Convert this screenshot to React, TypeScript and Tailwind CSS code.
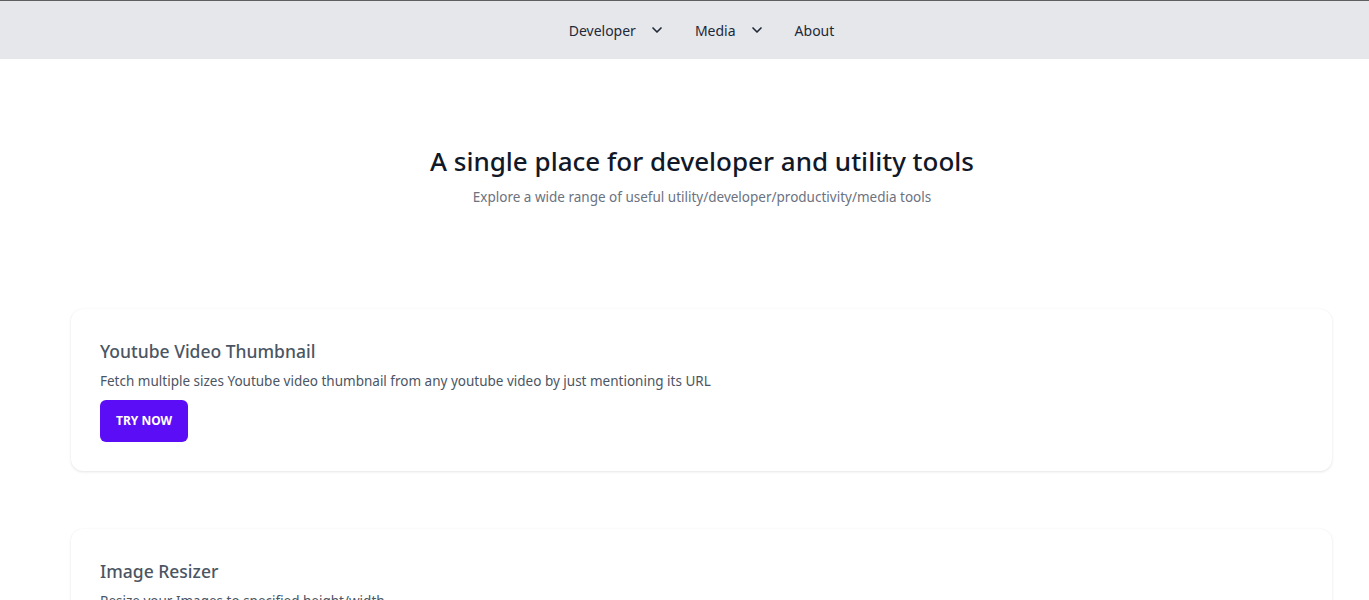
import { ChevronDown } from "lucide-react";

const tools = [
  {
    title: "Youtube Video Thumbnail",
    desc: "Fetch multiple sizes Youtube video thumbnail from any youtube video by just mentioning its URL",
  },
  {
    title: "Image Resizer",
    desc: "Resize your Images to specified height/width",
  },
  {
    title: "JSON Formatter",
    desc: "Format and validate your JSON data",
  },
];

export default function App() {
  return (
    <div className="min-h-screen bg-white font-['Noto_Sans','Open_Sans',sans-serif]">
      {/* Nav */}
      <nav className="h-[59px] bg-[#e5e7eb] border-t border-[#5f5f5f] flex items-center justify-center pl-[34px]">
        <ul className="flex items-center gap-[30px] text-[14px] text-[#1f2937]">
          <li className="flex items-center gap-[13px]">
            Developer <ChevronDown size={16} strokeWidth={2.5} />
          </li>
          <li className="flex items-center gap-[13px]">
            Media <ChevronDown size={16} strokeWidth={2.5} />
          </li>
          <li>About</li>
        </ul>
      </nav>

      {/* Hero */}
      <header className="pt-[84px] pl-[35px] text-center">
        <h1 className="text-[26px] leading-[36px] font-medium text-[#111827]">
          A single place for developer and utility tools
        </h1>
        <p className="mt-[8px] text-[13.5px] text-[#6b7280]">
          Explore a wide range of useful utility/developer/productivity/media tools
        </p>
      </header>

      {/* Cards */}
      <main className="pl-[71px] pr-[37px] pt-[102px] flex flex-col gap-[58px] pb-10">
        {tools.map((t) => (
          <section
            key={t.title}
            className="rounded-[12px] bg-white shadow-[0_1px_3px_rgba(0,0,0,0.1),0_0_1px_rgba(0,0,0,0.05)] px-[29px] pt-[30px] pb-[29px]"
          >
            <h2 className="text-[17.5px] leading-[24px] font-medium text-[#4b5563]">{t.title}</h2>
            <p className="mt-[8px] text-[13.5px] leading-[20px] text-[#4b5563]">{t.desc}</p>
            <button className="mt-[9px] h-[42px] px-[16px] rounded-[6px] bg-[#5b0ef5] text-white text-[12px] font-bold">
              TRY NOW
            </button>
          </section>
        ))}
      </main>
    </div>
  );
}
